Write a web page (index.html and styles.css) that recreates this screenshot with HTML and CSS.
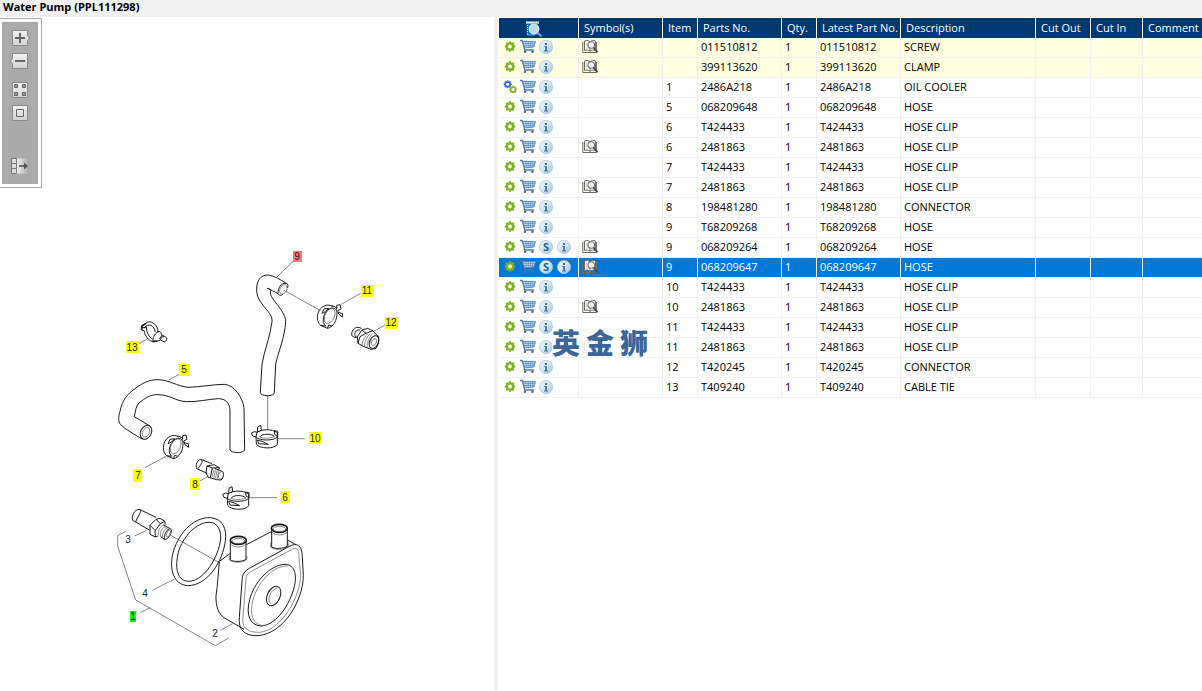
FILE: index.html
```html
<!DOCTYPE html>
<html lang="en">
<head>
<meta charset="utf-8">
<title>Water Pump (PPL111298)</title>
<link rel="stylesheet" href="styles.css">
</head>
<body class="app">
<svg class="defs" width="0" height="0" aria-hidden="true">
  <defs>
    <linearGradient id="disc" x1="0" y1="0" x2="1" y2="1"><stop offset="0" stop-color="#eef6fb"/><stop offset=".5" stop-color="#d3e5f2"/><stop offset="1" stop-color="#9cc1dd"/></linearGradient>
    <linearGradient id="key" x1="0" y1="0" x2="0" y2="1"><stop offset="0" stop-color="#f2f2f2"/><stop offset="1" stop-color="#d2d2d2"/></linearGradient>
    <linearGradient id="fade" x1="0" y1="0" x2="1" y2="0"><stop offset="0" stop-color="#f0f0f0"/><stop offset="1" stop-color="#aaa"/></linearGradient>
    <g id="cog"><circle cx="6.5" cy="6.5" r="4.3" fill="currentColor"/><path d="M6.5 1.2v10.6M1.2 6.5h10.6M2.8 2.8l7.4 7.4M10.2 2.8l-7.4 7.4" stroke="currentColor" stroke-width="2"/></g>
    <symbol id="gear" viewBox="0 0 13 13"><use href="#cog" color="#7fb026"/><circle class="hole" cx="6.5" cy="6.5" r="1.9"/></symbol>
    <symbol id="gears" viewBox="0 0 13 13" overflow="visible"><g transform="translate(-.8 -.6) scale(.76)"><use href="#cog" color="#2f6fd0"/><circle cx="6.5" cy="6.5" r="2" fill="#fff"/></g><g transform="translate(4.6 4.600) scale(.76)"><use href="#cog" color="#86b92c"/><circle cx="6.5" cy="6.5" r="2" fill="#fff"/></g></symbol>
    <symbol id="cart" viewBox="0 0 15 15" overflow="visible"><path d="M0 1.500h2.200l2.600 9.500h9" fill="none" stroke="#4878ae" stroke-width="1.300"/><path d="M2.800 2.500h12.700l-1.600 5.500-9.300.9z" fill="#c3d6ea" stroke="#5583b5" stroke-width=".9"/><path d="M3.400 4.500h11.500M4 6.500h10.400M5.700 2.500l.6 6M8.100 2.500l.3 6M10.500 2.500v6M12.900 2.500l-.5 6" stroke="#5583b5" stroke-width=".6"/><circle cx="5" cy="12.800" r="1.300" fill="#45719d"/><circle cx="12.500" cy="12.800" r="1.300" fill="#45719d"/></symbol>
    <symbol id="info" viewBox="0 0 14 14"><circle cx="7" cy="7" r="6.600" fill="url(#disc)" stroke="#a3c4dd" stroke-width=".7"/><path d="M6 6h2v4.500h1v1H5v-1h1.200V7H5.300V6z" fill="#4272a9"/><path d="M6 3h2v2H6z" fill="#4272a9"/></symbol>
    <symbol id="super" viewBox="0 0 14 14"><circle cx="7" cy="7" r="6.600" fill="url(#disc)" stroke="#a3c4dd" stroke-width=".7"/><text class="disc-letter" x="7" y="11" text-anchor="middle">S</text></symbol>
    <symbol id="book" viewBox="0 0 16 15"><path d="M2.500 2C5 1 7 1.500 8 3c1-1.500 3.500-2 5.500-1v9.500c-2-.7-4-.6-5.500.8-1.500-1.400-3.500-1.500-5.500-.8z" fill="#fff" stroke="#6a6a5e"/><path d="M.8 3v10.500h13.600V3M8 3v9.500" fill="none" stroke="#6a6a5e"/><path d="M4.300 3.500v6.500M6 3.500v6.500" stroke="#d5d5c8"/><circle cx="9.300" cy="6" r="3.300" fill="#eef2f4" stroke="#777" stroke-width="1.100"/><path d="M11.500 8.500l4 4.800" stroke="#444" stroke-width="1.700"/></symbol>
    <symbol id="lookup" viewBox="0 0 16 16"><path d="M.5 1h12v13H.5z" fill="#0875aa"/><path d="M0 1.500h13" stroke="#e7f6fb" stroke-width="2"/><path d="M7 1h5" stroke="#55b0d8" stroke-dasharray="1 1"/><path d="M1.500 4v10" stroke="#b5ddee" stroke-dasharray="1 1"/><path d="M1 14h8" stroke="#55b0d8"/><circle cx="8" cy="8" r="4.800" fill="#bcd9e8" stroke="#e5edf1" stroke-width="1.200"/><path d="M11.500 11.500l4 4" stroke="#6aa0c5" stroke-width="2.200"/></symbol>
  </defs>
</svg>

<header class="titlebar"><h1 class="title">Water Pump (PPL111298)</h1></header>
<main class="split">
  <section class="drawing" aria-label="Parts drawing">
    <svg class="diagram" viewBox="0 0 494 674" role="img" aria-label="Exploded view of water pump parts">
      <g transform="translate(0 -17)">
        <g transform="translate(240 240) scale(.33333)">
          <path class="lead" d="M160 63L110 112M130 150L238 210M362 160L302 194M435 255L400 275M83 467V570"/>
          <path class="part" d="M139 130C120 119 105 108 85 105C60 104 49 125 50 150C50 170 60 185 75 203C90 222 97 228 96 245C92 285 72 335 66 372L61 458C62 470 103 470 103 458L107 372C115 335 135 290 137 245C137 225 120 205 105 185C92 168 90 162 92 152C90 147 87 146 82 145C92 149 103 155 114 161"/>
          <path class="part" d="M139 130C145 131 145 142 142 144M139 130C122 128 114 144 114 161C119 169 126 166 129 162"/><ellipse class="fine" cx="130" cy="148" rx="10" ry="15" transform="rotate(25 130 148)"/>
          <g id="clamp"><path class="part" d="M278 200C262 188 240 200 234 220C230 236 233 249 242 256L262 265C280 262 292 240 291 218C290 207 284 204 276 204C258 207 248 228 250 248L257 258M242 256L257 258M262 265L266 255L276 258"/><ellipse class="fine" cx="269" cy="228" rx="14" ry="24" transform="rotate(25 269 228)"/><path class="part" d="M246 220L252 207L266 205C260 214 252 218 246 220M275 196L290 203L288 210M290 205V196L300 194L303 207L293 212L296 222L307 231L308 221L294 217"/></g>
          <path class="part" d="M365 266C350 255 334 267 335 286L345 293L354 290M348 291C340 282 346 268 361 270M354 310L352 290L366 270L383 265L398 272L410 285L416 289V309L408 325L393 328L372 320L354 310M366 270L378 280L398 272M354 310L360 290L378 280"/><ellipse class="part" cx="402" cy="306" rx="13" ry="20" transform="rotate(25 402 306)"/><ellipse class="fine" cx="402" cy="306" rx="7" ry="11" transform="rotate(25 402 306)"/>
          <path class="fine" d="M384 280C373 291 367 303 366 315M391 280C380 291 374 305 373 319M398 281C387 292 381 306 381 322M405 284C394 293 387 308 388 325"/>
        </g>
        <g transform="translate(100 310) scale(.33333)">
          <path class="lead" d="M117 101L140 88M238 193L206 210M135 473L198 439M296 515L325 499"/>
          <path class="part" d="M126 387C105 374 76 358 62 344C54 335 55 320 60 304C68 267 82 253 105 236C126 220 147 209 174 209C205 209 232 229 264 232C303 231 339 223 374 223C402 225 428 262 432 293L434 420C430 431 392 430 390 419L390 299C388 279 377 266 355 266C321 268 294 276 260 275C225 274 208 252 168 254C151 255 135 264 118 278C108 286 107 301 103 320L151 349"/>
          <ellipse class="part" cx="138" cy="367" rx="16" ry="22" transform="rotate(28 138 367)"/><ellipse class="fine" cx="138" cy="367" rx="10" ry="15" transform="rotate(28 138 367)"/>
          <path class="part" d="M174 67C174 45 158 34 144 36L125 47V60L133 63C133 76 146 92 158 95L172 93L182 90L193 96C203 92 202 81 193 79L184 74C184 64 176 62 172 67C159 76 157 91 160 95M133 53C146 38 163 46 166 67M139 51C139 65 145 80 157 87M133 53L139 51M187 75L178 87M182 90C182 84 187 78 193 79M125 53H137"/><path class="bold" d="M138 40L125 49V60M158 95L172 93"/>
          <use href="#clamp" transform="translate(-42 181)"/>
          <path class="part" d="M336 461L303 448C291 450 286 465 290 476L322 490M303 448C313 454 298 469 294 476M318 489L321 468L342 464L358 473L356 480M318 489L325 502L350 509L363 510C372 504 372 488 368 485L344 475M321 468L337 474L358 473M337 474L331 503"/><ellipse class="fine" cx="363" cy="496" rx="7" ry="12" transform="rotate(20 363 496)"/>
          <path class="fine" d="M342 479L336 501M347 479L341 504M352 480L346 506M357 482L351 508"/>
        </g>
        <g transform="translate(180 420) scale(.33333)">
          <path class="lead" d="M293 56H375M208 233H291"/>
          <g id="band"><path class="part" d="M231 37C245 27 275 26 292 38V73C285 88 238 87 229 72L228 51C238 63 282 63 292 51M231 37L228 51L218 48L214 39L223 35L232 37L233 21L242 16L244 30L239 35M232 60L249 65L265 73L236 71ZM283 32L293 34V50L284 43Z"/><path class="part" d="M239 51C245 40 276 40 283 50"/><path class="fine" d="M239 51C249 56 270 56 283 50"/></g>
          <use href="#band" transform="translate(-86 184)"/>
        </g>
        <g transform="translate(100 490) scale(.33333)">
          <path class="lead" d="M104 138L138 122M157 301L224 267M121 368L150 353M361 421L398 401M78 124L53 137V168L107 330L346 467L386 444M212 136L360 219"/>
          <path class="part" d="M168 82L118 58C103 59 94 76 98 91L148 120M118 58C130 63 111 80 107 96M168 88L180 85L195 94V104M168 88L150 106V133L166 141L174 138M166 141L165 123L181 101L195 94M150 106L165 121M181 101L168 88M182 140L194 149C210 146 219 122 211 116L190 105M194 149C191 130 202 117 211 116"/><path class="fine" d="M176 137C172 122 182 105 193 106M182 140C178 124 188 110 199 110M188 144C185 129 195 113 205 113"/><ellipse class="fine" cx="205" cy="131" rx="5" ry="11" transform="rotate(20 205 131)"/>
          <path class="part" d="M332 83C368 87 381 115 376 153C368 214 323 287 263 287C220 284 208 237 218 193C231 136 278 80 332 83Z"/><path class="part" d="M328 97C354 96 366 125 361 155C349 216 306 276 263 274C229 270 225 229 235 187C248 140 290 96 328 97Z"/>
          <path class="part" d="M391 190L358 214C355 246 353 286 348 318C347 352 357 372 372 383L432 418M439 164L514 125M562 150L588 164"/>
          <path class="part" d="M588 164C601 166 606 179 607 200L610 257C610 329 552 431 474 437C432 438 415 419 418 382L427 262C429 248 438 241 448 235L570 168C576 165 583 163 588 164Z"/><path class="fine" d="M588 175C596 178 597 191 597 203L602 253C602 318 546 420 479 427C439 427 425 414 429 379L438 267C438 253 445 248 456 243L574 179C579 176 584 174 588 175Z"/>
          <path class="part" d="M558 223C590 228 591 264 580 301C562 357 523 407 482 408C449 405 437 374 449 329C461 281 507 223 558 223Z"/><path class="fine" d="M563 228C514 227 469 285 458 333C448 374 459 399 485 407"/>
          <ellipse class="part" cx="521" cy="318" rx="19" ry="31" transform="rotate(25 521 318)"/><path class="fine" d="M533 293C511 302 501 322 511 341"/>
          <path class="solid" d="M391 153V210C401 216 427 216 438 208V153M515 117V171C524 177 550 177 562 168V117"/><ellipse class="bold" cx="415" cy="151" rx="24" ry="12"/><ellipse class="fine" cx="415" cy="153" rx="19" ry="8"/><ellipse class="bold" cx="538" cy="115" rx="24" ry="12"/><ellipse class="fine" cx="538" cy="117" rx="19" ry="8"/><path class="fine" d="M391 162C400 174 429 174 438 162M515 126C525 138 551 138 562 126"/><path class="fine" d="M388 198V210C401 220 433 219 441 207V198M512 158V172C525 182 556 180 565 168V158"/>
        </g>
        <g class="tags">
          <path class="tag" d="M361 285h13v12h-13zM385 317h13v12h-13zM126 341h13v12h-13zM179 364h11v12h-11zM309 432h13v12h-13zM133 469h9v13h-9zM190 478h10v12h-10zM281 491h9v12h-9z"/>
          <path class="tag-hot" d="M293 251h9v11h-9z"/><path class="tag-assy" d="M130 611h6v11h-6z"/>
          <text x="297" y="260">9</text><text x="367" y="294">11</text><text x="391" y="326">12</text><text x="132" y="351">13</text><text x="184" y="373">5</text><text x="315" y="442">10</text><text x="138" y="479">7</text><text x="195" y="488">8</text><text x="285" y="501">6</text><text x="128" y="543">3</text><text x="145" y="597">4</text><text x="133" y="620">1</text><text x="215" y="637">2</text>
        </g>
      </g>
    </svg>
    <div class="palette"><div class="tools" role="toolbar" aria-label="Drawing tools">
      <button class="tool" aria-label="Zoom in"><svg viewBox="0 0 16 16"><path d="M.5.500h15v5l2 2.500-2 2.500v5H.5z" fill="url(#key)" stroke="#888"/><path d="M3 8h10M8 3v10" stroke="#666" stroke-width="2"/></svg></button>
      <button class="tool" aria-label="Zoom out"><svg viewBox="0 0 16 16"><path d="M15.500.500H.5v5l-2 2.500 2 2.500v5h15z" fill="url(#key)" stroke="#888"/><path d="M3 8h10" stroke="#666" stroke-width="2"/></svg></button>
      <button class="tool tool-group" aria-label="Show all"><svg viewBox="0 0 16 16"><path d="M.5.500h15v15H.5z" fill="url(#key)" stroke="#888"/><path d="M2.500 2.500h3v3h-3zM10.500 2.500h3v3h-3zM2.500 10.500h3v3h-3zM10.500 10.500h3v3h-3z" fill="#999" stroke="#666"/></svg></button>
      <button class="tool" aria-label="Fit window"><svg viewBox="0 0 16 16"><path d="M.5.500h15v15H.5z" fill="url(#key)" stroke="#888"/><path d="M4.500 4.500h7v7h-7z" fill="none" stroke="#666"/></svg></button>
      <button class="tool tool-last" aria-label="Move panel"><svg viewBox="0 0 16 16"><path d="M5 .500h11v15H5z" fill="url(#fade)"/><path d="M-.5.500h5v15h-5z" fill="#ddd" stroke="#777"/><path d="M-.5 5.500h5M-.5 10.500h5" stroke="#777"/><path d="M7 8h7" stroke="#444" stroke-width="1.500"/><path d="M12 4.500L16 8l-4 3.500z" fill="#555"/></svg></button>
    </div></div>
  </section>
  <div class="splitter" role="separator"></div>
  <section class="list" aria-label="Parts list">
    <table class="parts">
      <colgroup><col class="w-actions"><col class="w-mid"><col class="w-small"><col class="w-mid"><col class="w-small"><col class="w-mid"><col class="w-desc"><col class="w-out"><col class="w-in"><col></colgroup>
      <thead><tr><th class="look"><svg class="lookup" role="img" aria-label="Actions"><use href="#lookup"/></svg></th><th>Symbol(s)</th><th>Item</th><th>Parts No.</th><th>Qty.</th><th>Latest Part No.</th><th>Description</th><th>Cut Out</th><th>Cut In</th><th>Comment</th></tr></thead>
      <tbody>
        <tr class="note"><td><div class="acts"><svg class="gear"><use href="#gear"/></svg><button class="act cart" aria-label="Add to cart"><svg><use href="#cart"/></svg></button><button class="act" aria-label="Information"><svg><use href="#info"/></svg></button></div></td><td><svg class="book"><use href="#book"/></svg></td><td></td><td>011510812</td><td>1</td><td>011510812</td><td>SCREW</td><td></td><td></td><td></td></tr>
        <tr class="note"><td><div class="acts"><svg class="gear"><use href="#gear"/></svg><button class="act cart" aria-label="Add to cart"><svg><use href="#cart"/></svg></button><button class="act" aria-label="Information"><svg><use href="#info"/></svg></button></div></td><td><svg class="book"><use href="#book"/></svg></td><td></td><td>399113620</td><td>1</td><td>399113620</td><td>CLAMP</td><td></td><td></td><td></td></tr>
        <tr><td><div class="acts"><svg class="gear"><use href="#gears"/></svg><button class="act cart" aria-label="Add to cart"><svg><use href="#cart"/></svg></button><button class="act" aria-label="Information"><svg><use href="#info"/></svg></button></div></td><td></td><td>1</td><td>2486A218</td><td>1</td><td>2486A218</td><td>OIL COOLER</td><td></td><td></td><td></td></tr>
        <tr><td><div class="acts"><svg class="gear"><use href="#gear"/></svg><button class="act cart" aria-label="Add to cart"><svg><use href="#cart"/></svg></button><button class="act" aria-label="Information"><svg><use href="#info"/></svg></button></div></td><td></td><td>5</td><td>068209648</td><td>1</td><td>068209648</td><td>HOSE</td><td></td><td></td><td></td></tr>
        <tr><td><div class="acts"><svg class="gear"><use href="#gear"/></svg><button class="act cart" aria-label="Add to cart"><svg><use href="#cart"/></svg></button><button class="act" aria-label="Information"><svg><use href="#info"/></svg></button></div></td><td></td><td>6</td><td>T424433</td><td>1</td><td>T424433</td><td>HOSE CLIP</td><td></td><td></td><td></td></tr>
        <tr><td><div class="acts"><svg class="gear"><use href="#gear"/></svg><button class="act cart" aria-label="Add to cart"><svg><use href="#cart"/></svg></button><button class="act" aria-label="Information"><svg><use href="#info"/></svg></button></div></td><td><svg class="book"><use href="#book"/></svg></td><td>6</td><td>2481863</td><td>1</td><td>2481863</td><td>HOSE CLIP</td><td></td><td></td><td></td></tr>
        <tr><td><div class="acts"><svg class="gear"><use href="#gear"/></svg><button class="act cart" aria-label="Add to cart"><svg><use href="#cart"/></svg></button><button class="act" aria-label="Information"><svg><use href="#info"/></svg></button></div></td><td></td><td>7</td><td>T424433</td><td>1</td><td>T424433</td><td>HOSE CLIP</td><td></td><td></td><td></td></tr>
        <tr><td><div class="acts"><svg class="gear"><use href="#gear"/></svg><button class="act cart" aria-label="Add to cart"><svg><use href="#cart"/></svg></button><button class="act" aria-label="Information"><svg><use href="#info"/></svg></button></div></td><td><svg class="book"><use href="#book"/></svg></td><td>7</td><td>2481863</td><td>1</td><td>2481863</td><td>HOSE CLIP</td><td></td><td></td><td></td></tr>
        <tr><td><div class="acts"><svg class="gear"><use href="#gear"/></svg><button class="act cart" aria-label="Add to cart"><svg><use href="#cart"/></svg></button><button class="act" aria-label="Information"><svg><use href="#info"/></svg></button></div></td><td></td><td>8</td><td>198481280</td><td>1</td><td>198481280</td><td>CONNECTOR</td><td></td><td></td><td></td></tr>
        <tr><td><div class="acts"><svg class="gear"><use href="#gear"/></svg><button class="act cart" aria-label="Add to cart"><svg><use href="#cart"/></svg></button><button class="act" aria-label="Information"><svg><use href="#info"/></svg></button></div></td><td></td><td>9</td><td>T68209268</td><td>1</td><td>T68209268</td><td>HOSE</td><td></td><td></td><td></td></tr>
        <tr><td><div class="acts"><svg class="gear"><use href="#gear"/></svg><button class="act cart" aria-label="Add to cart"><svg><use href="#cart"/></svg></button><button class="act" aria-label="Supersession"><svg><use href="#super"/></svg></button><button class="act" aria-label="Information"><svg><use href="#info"/></svg></button></div></td><td><svg class="book"><use href="#book"/></svg></td><td>9</td><td>068209264</td><td>1</td><td>068209264</td><td>HOSE</td><td></td><td></td><td></td></tr>
        <tr class="selected" aria-selected="true"><td><div class="acts"><svg class="gear"><use href="#gear"/></svg><button class="act cart" aria-label="Add to cart"><svg><use href="#cart"/></svg></button><button class="act" aria-label="Supersession"><svg><use href="#super"/></svg></button><button class="act" aria-label="Information"><svg><use href="#info"/></svg></button></div></td><td><svg class="book"><use href="#book"/></svg></td><td>9</td><td>068209647</td><td>1</td><td>068209647</td><td>HOSE</td><td></td><td></td><td></td></tr>
        <tr><td><div class="acts"><svg class="gear"><use href="#gear"/></svg><button class="act cart" aria-label="Add to cart"><svg><use href="#cart"/></svg></button><button class="act" aria-label="Information"><svg><use href="#info"/></svg></button></div></td><td></td><td>10</td><td>T424433</td><td>1</td><td>T424433</td><td>HOSE CLIP</td><td></td><td></td><td></td></tr>
        <tr><td><div class="acts"><svg class="gear"><use href="#gear"/></svg><button class="act cart" aria-label="Add to cart"><svg><use href="#cart"/></svg></button><button class="act" aria-label="Information"><svg><use href="#info"/></svg></button></div></td><td><svg class="book"><use href="#book"/></svg></td><td>10</td><td>2481863</td><td>1</td><td>2481863</td><td>HOSE CLIP</td><td></td><td></td><td></td></tr>
        <tr><td><div class="acts"><svg class="gear"><use href="#gear"/></svg><button class="act cart" aria-label="Add to cart"><svg><use href="#cart"/></svg></button><button class="act" aria-label="Information"><svg><use href="#info"/></svg></button></div></td><td></td><td>11</td><td>T424433</td><td>1</td><td>T424433</td><td>HOSE CLIP</td><td></td><td></td><td></td></tr>
        <tr><td><div class="acts"><svg class="gear"><use href="#gear"/></svg><button class="act cart" aria-label="Add to cart"><svg><use href="#cart"/></svg></button><button class="act" aria-label="Information"><svg><use href="#info"/></svg></button></div></td><td><svg class="book"><use href="#book"/></svg></td><td>11</td><td>2481863</td><td>1</td><td>2481863</td><td>HOSE CLIP</td><td></td><td></td><td></td></tr>
        <tr><td><div class="acts"><svg class="gear"><use href="#gear"/></svg><button class="act cart" aria-label="Add to cart"><svg><use href="#cart"/></svg></button><button class="act" aria-label="Information"><svg><use href="#info"/></svg></button></div></td><td></td><td>12</td><td>T420245</td><td>1</td><td>T420245</td><td>CONNECTOR</td><td></td><td></td><td></td></tr>
        <tr><td><div class="acts"><svg class="gear"><use href="#gear"/></svg><button class="act cart" aria-label="Add to cart"><svg><use href="#cart"/></svg></button><button class="act" aria-label="Information"><svg><use href="#info"/></svg></button></div></td><td></td><td>13</td><td>T409240</td><td>1</td><td>T409240</td><td>CABLE TIE</td><td></td><td></td><td></td></tr>
      </tbody>
    </table>
    <div class="watermark" lang="zh"><span>英</span><span>金</span><span>狮</span></div>
  </section>
</main>
</body>
</html>
```
FILE: styles.css
```css
* { box-sizing: border-box; }

.app {
  margin: 0;
  min-height: 100vh;
  display: flex;
  flex-direction: column;
  background: #fff;
  color: #000;
  font: 11px/16px "Open Sans", "Noto Sans", sans-serif;
}

.defs { position: absolute; }

.titlebar { padding: 0 3px 3px; background: #f0f0f0; }
.title { margin: 0; font-size: 11px; line-height: 14px; font-weight: 700; }

.split {
  flex: 1;
  display: grid;
  grid-template-columns: 494fr 4px 704fr;
}
.splitter { background: #f0f0f0; }

/* Drawing pane */
.drawing { position: relative; min-width: 0; }
.diagram { display: block; width: 100%; height: auto; }
.part, .fine, .lead, .bold, .solid { fill: none; stroke: #1a1a1a; stroke-linejoin: round; }
.part { stroke-width: 3; }
.fine { stroke-width: 2; stroke: #555; }
.lead { stroke-width: 2.4; stroke: #666; }
.bold { stroke-width: 5; }
.solid { stroke-width: 3; fill: #fff; }
.tags { font: 10px "Liberation Sans", sans-serif; text-anchor: middle; fill: #222; }
.tag { fill: #ff0; }
.tag-hot { fill: #f77; }
.tag-assy { fill: #0f0; }

.palette {
  position: absolute;
  top: 1px;
  left: 0;
  padding: 3px 3px 3px 2px;
  border: 1px solid #aaa;
  border-left: 0;
  background: #fff;
}
.tools {
  display: flex;
  flex-direction: column;
  gap: 7px;
  padding: 8px 10px 10px;
  background: #aaa;
}
.tool, .act { padding: 0; border: 0; background: none; }
.tool { width: 16px; height: 16px; }
.tool svg, .act svg { display: block; width: 100%; height: 100%; overflow: visible; }
.tool-group { margin-top: 6px; }
.tool-last { margin-top: 30px; }

/* Parts list */
.list { position: relative; min-width: 0; padding: 1px 0 0 1px; }
.parts {
  width: 100%;
  table-layout: fixed;
  border-collapse: separate;
  border-spacing: 0;
}
.w-actions { width: 80px; }
.w-mid { width: 84px; }
.w-small { width: 35px; }
.w-desc { width: 135px; }
.w-out { width: 55px; }
.w-in { width: 52px; }
.parts th, .parts td {
  height: 20px;
  text-align: left;
  vertical-align: middle;
  white-space: nowrap;
  border-right: 1px solid #f0f0f0;
}
.parts th {
  padding: 0 0 0 5px;
  background: #003870;
  color: #fff;
  font-weight: 400;
  border-right-color: #fff;
}
.parts td { padding: 0 0 2px 3px; border-bottom: 1px solid #f0f0f0; }
.parts th:last-child, .parts td:last-child { border-right: 0; }
.parts .look { padding: 0 10px 0 0; text-align: center; }
.note { background: #ffffe1; }
.selected { background: #0078d7; color: #fff; }

.acts { display: flex; align-items: center; gap: 3px; padding-left: 1px; }
.gear { width: 14px; height: 13px; }
.hole { fill: #fff; }
.selected .hole { fill: #0078d7; }
.act { width: 14px; height: 14px; }
.act + .act { margin-left: 1px; }
.cart { width: 15px; height: 15px; }
.book { display: block; width: 16px; height: 15px; }
.lookup { display: inline-block; width: 16px; height: 16px; vertical-align: middle; }
.disc-letter { font: 700 11px "Open Sans", sans-serif; fill: #126a9c; }

.watermark {
  position: absolute;
  top: 311px;
  left: 54px;
  display: flex;
  gap: 6px;
  background: rgba(255, 255, 255, .85);
  color: #3a6698;
  font: 900 28px/29px "Noto Sans CJK SC", sans-serif;
  pointer-events: none;
}
```
